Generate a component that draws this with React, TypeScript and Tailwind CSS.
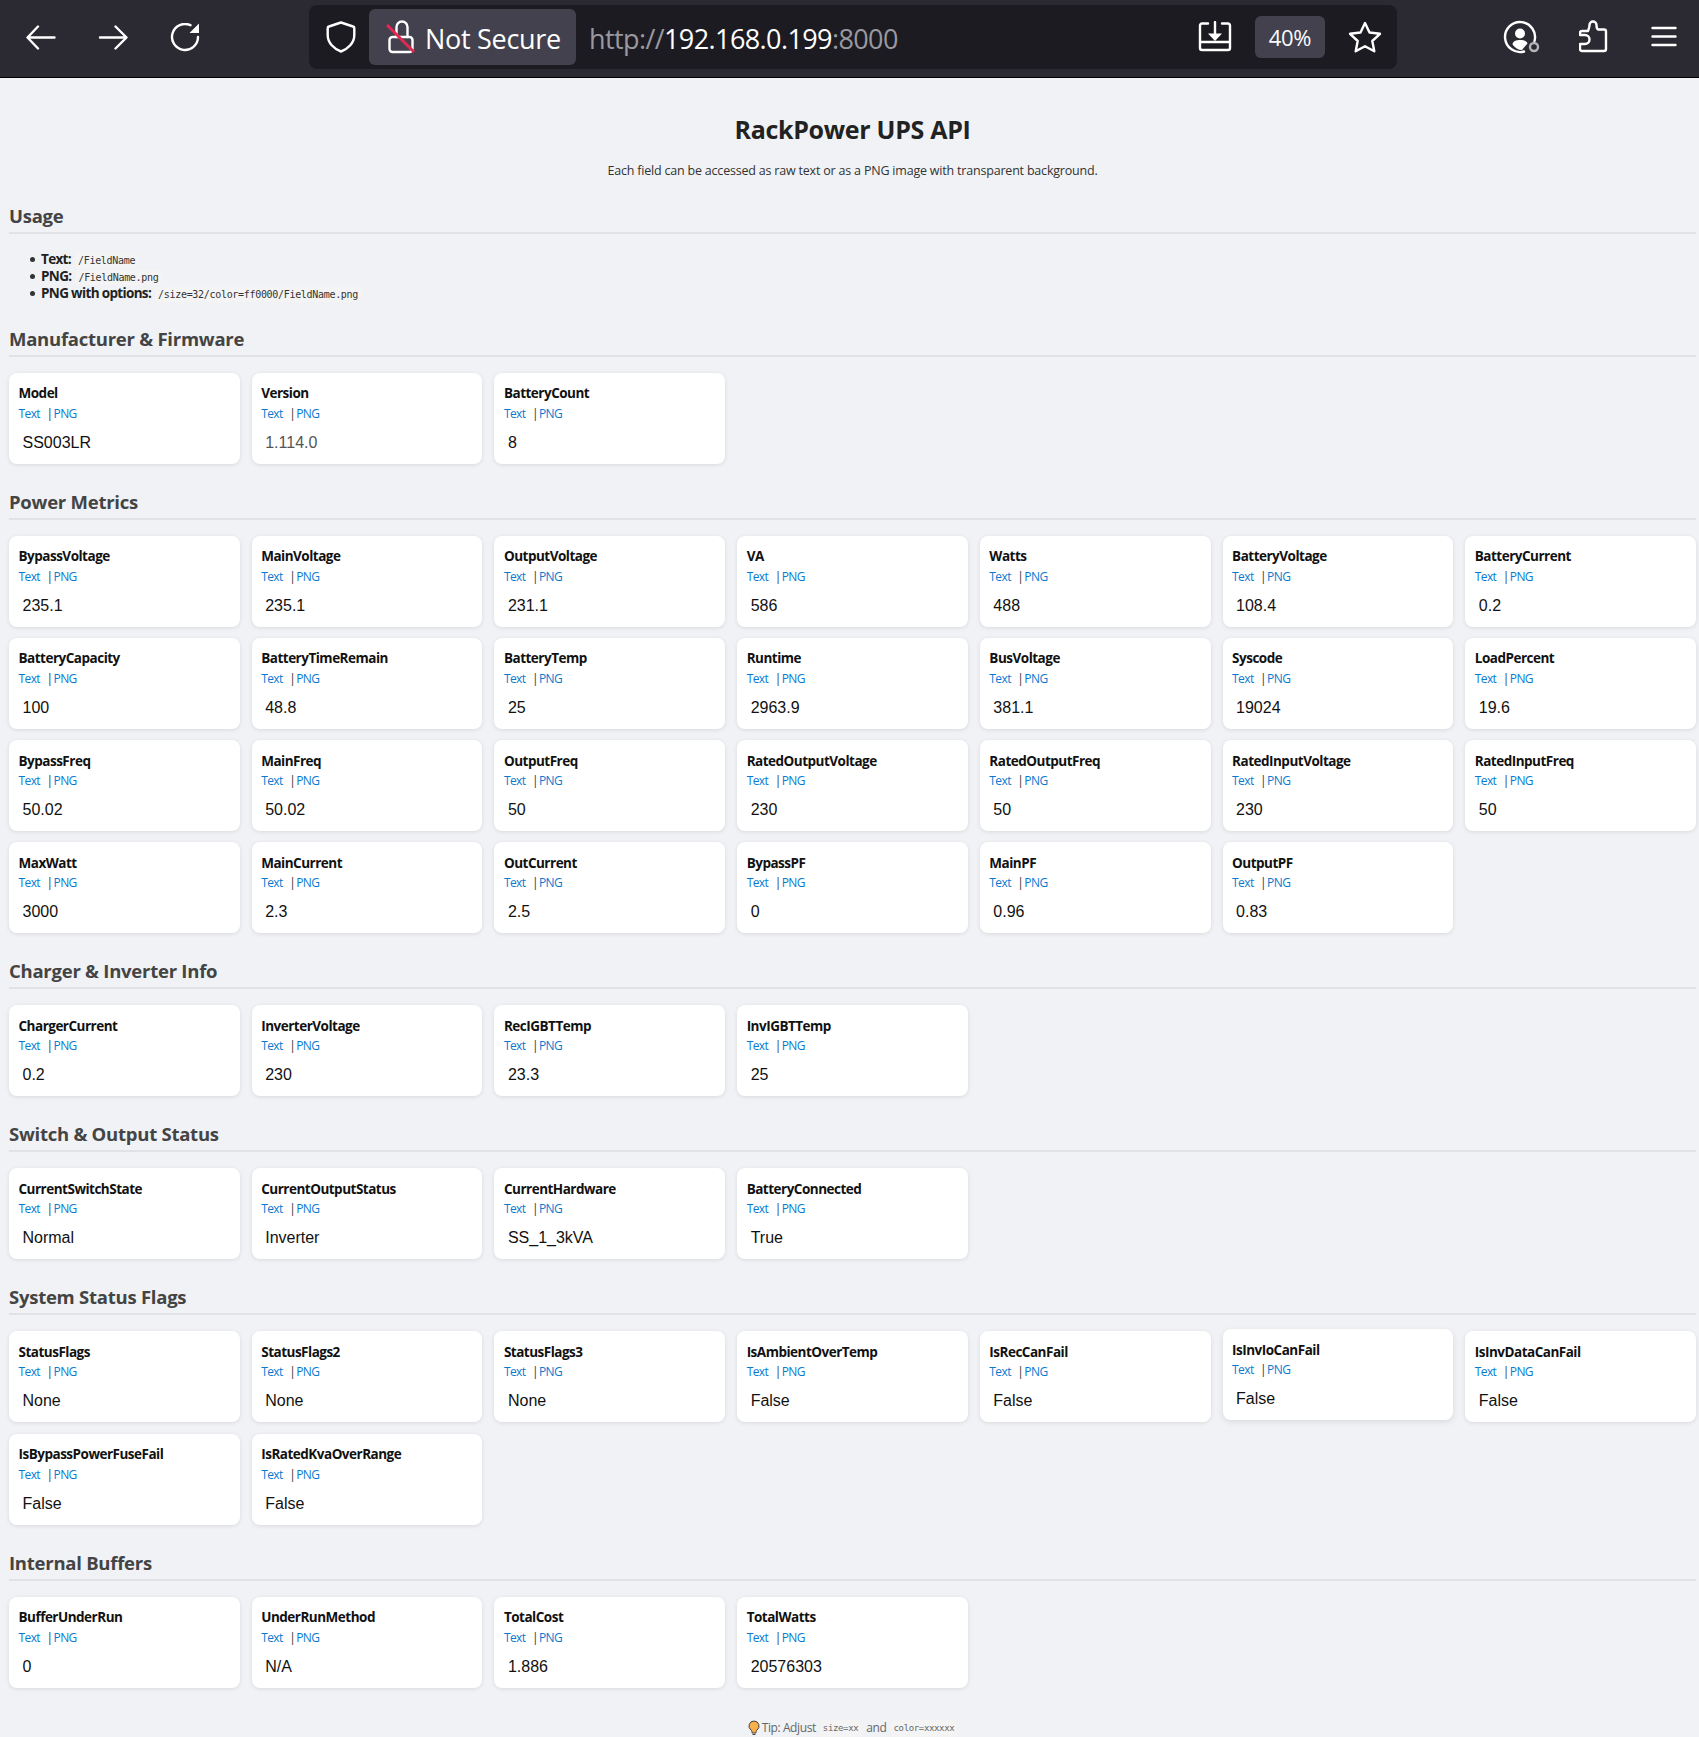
import React from "react";

type Field = [string, string];
const sections: { title: string; fields: Field[] }[] = [
  { title: "Manufacturer & Firmware", fields: [["Model", "SS003LR"], ["Version", "1.114.0"], ["BatteryCount", "8"]] },
  {
    title: "Power Metrics",
    fields: [
      ["BypassVoltage", "235.1"], ["MainVoltage", "235.1"], ["OutputVoltage", "231.1"], ["VA", "586"], ["Watts", "488"], ["BatteryVoltage", "108.4"], ["BatteryCurrent", "0.2"],
      ["BatteryCapacity", "100"], ["BatteryTimeRemain", "48.8"], ["BatteryTemp", "25"], ["Runtime", "2963.9"], ["BusVoltage", "381.1"], ["Syscode", "19024"], ["LoadPercent", "19.6"],
      ["BypassFreq", "50.02"], ["MainFreq", "50.02"], ["OutputFreq", "50"], ["RatedOutputVoltage", "230"], ["RatedOutputFreq", "50"], ["RatedInputVoltage", "230"], ["RatedInputFreq", "50"],
      ["MaxWatt", "3000"], ["MainCurrent", "2.3"], ["OutCurrent", "2.5"], ["BypassPF", "0"], ["MainPF", "0.96"], ["OutputPF", "0.83"],
    ],
  },
  { title: "Charger & Inverter Info", fields: [["ChargerCurrent", "0.2"], ["InverterVoltage", "230"], ["RecIGBTTemp", "23.3"], ["InvIGBTTemp", "25"]] },
  { title: "Switch & Output Status", fields: [["CurrentSwitchState", "Normal"], ["CurrentOutputStatus", "Inverter"], ["CurrentHardware", "SS_1_3kVA"], ["BatteryConnected", "True"]] },
  {
    title: "System Status Flags",
    fields: [
      ["StatusFlags", "None"], ["StatusFlags2", "None"], ["StatusFlags3", "None"], ["IsAmbientOverTemp", "False"], ["IsRecCanFail", "False"], ["IsInvIoCanFail", "False"], ["IsInvDataCanFail", "False"],
      ["IsBypassPowerFuseFail", "False"], ["IsRatedKvaOverRange", "False"],
    ],
  },
  { title: "Internal Buffers", fields: [["BufferUnderRun", "0"], ["UnderRunMethod", "N/A"], ["TotalCost", "1.886"], ["TotalWatts", "20576303"]] },
];

function Card({ name, value }: { name: string; value: string }) {
  const hovered = name === "IsInvIoCanFail";
  return (
    <div className={hovered ? "h-[91px] rounded-lg bg-white pl-[9.5px] pt-[10.5px] shadow-[0_2px_6px_rgba(0,0,0,0.1)] -translate-y-0.5" : "h-[91px] rounded-lg bg-white pl-[9.5px] pt-[10.5px] shadow-[0_1px_4px_rgba(0,0,0,0.1)]"}>
      <div className="text-[13.500px] leading-[20px] font-bold text-[#111] font-['Open_Sans',sans-serif] tracking-[-0.5px]">{name}</div>
      <div className="mt-[0.5px] flex items-center text-[12px] leading-[20px] font-['Open_Sans',sans-serif] tracking-[-0.6px]">
        <span className="text-[#0a7ad1]">Text</span>
        <span className="ml-[6.500px] text-[#333]">|</span>
        <span className="ml-[1px] text-[#0a7ad1]">PNG</span>
      </div>
      <div className={name === "Version" ? "mt-[9px] pl-[4px] text-[16px] leading-[20px] text-[#555] font-['Liberation_Sans',sans-serif]" : "mt-[9px] pl-[4px] text-[16px] leading-[20px] text-[#111] font-['Liberation_Sans',sans-serif]"}>{value}</div>
    </div>
  );
}

function Code({ children }: { children: React.ReactNode }) {
  return <code className="ml-[4px] rounded-[3px] bg-[#f4f4f4] px-[3px] py-[2px] text-[10px] leading-[14px] font-['DejaVu_Sans_Mono',monospace] tracking-[-0.31px] text-[#333]">{children}</code>;
}

function TipCode({ children }: { children: React.ReactNode }) {
  return <code className="ml-[4px] rounded-[3px] bg-[#f4f4f4] px-[3px] py-[2px] text-[9px] leading-[13px] font-['DejaVu_Sans_Mono',monospace] tracking-[-0.35px] text-[#666]">{children}</code>;
}

function Bullet() {
  return <span className="mb-[2px] mr-[6px] inline-block size-[5px] rounded-full bg-[#333] align-middle" />;
}

const ic = { fill: "none", stroke: "white", strokeWidth: 2.4, strokeLinecap: "round" as const, strokeLinejoin: "round" as const };
const headingCls = "border-b-2 border-[#e0e2e6] pb-[2px] text-[18.500px] leading-[28px] font-bold text-[#444] font-['Open_Sans',sans-serif] tracking-[-0.25px]";
const boldCls = "font-bold text-[13.500px] tracking-[-0.66px]";

function Toolbar() {
  return (
    <div className="flex h-[78px] items-start border-b border-black bg-[#2b2a33] pt-[5px] font-['Open_Sans',sans-serif]">
      <div className="ml-[26px] mt-[18px] flex gap-[42px]">
        <svg width="30" height="30" viewBox="0 0 30 30" {...ic}><path d="M28.500 14.500H2M12 3.500 1.500 14.500 12 25.500" /></svg>
        <svg width="30" height="30" viewBox="0 0 30 30" {...ic}><path d="M2 14.500H28M17.500 3.500 28.500 14.500 17.500 25.500" /></svg>
        <svg width="30" height="30" viewBox="0 0 30 30" {...ic}><path d="M28 14A13 13 0 1 1 20.500 2.200" /><path d="M29 .5V10H19.500z" fill="white" stroke="none" /></svg>
      </div>
      <div className="ml-[109px] flex h-[64px] w-[1088px] items-center rounded-lg bg-[#1c1b22] pl-[17px]">
        <svg width="30" height="32" viewBox="0 0 30 32" {...ic}><path d="M15 1.500 27 5.500a1.500 1.500 0 0 1 1.300 1.500V14C28.300 22 22 28 15 30.500 8 28 1.700 22 1.700 14V7a1.500 1.500 0 0 1 1.300-1.500z" /></svg>
        <div className="ml-[13px] flex h-[56px] w-[207px] items-center rounded-md bg-[#42414d] pl-[17px] text-[27px] text-white">
          <svg width="30" height="34" viewBox="0 0 30 34" {...ic}>
            <path d="M10.500 17V7a5.500 5.500 0 0 1 11 0V17" />
            <rect x="3.500" y="17" width="23" height="15" rx="3" />
            <path d="M1 5 28 32" stroke="#e22850" strokeWidth="3" strokeLinecap="butt" />
          </svg>
          <span className="ml-[9px] mt-[5px] tracking-[-0.3px]">Not Secure</span>
        </div>
        <div className="ml-[13px] mt-[5px] text-[27px] tracking-[-0.6px] text-white"><span className="text-[#9a999f]">http://</span>192.168.0.199<span className="text-[#9a999f]">:8000</span></div>
        <div className="flex-1" />
        <svg width="34" height="32" viewBox="0 0 34 32" {...ic}>
          <path d="M10 2.500H4a2 2 0 0 0-2 2V27a2 2 0 0 0 2 2H30a2 2 0 0 0 2-2V4.500a2 2 0 0 0-2-2H24M2 21H32" />
          <path d="M17 1V14" /><path d="M10 12.500H24L17 20z" fill="white" stroke="none" />
        </svg>
        <div className="ml-[23px] flex h-[42px] w-[70px] items-center justify-center rounded-md bg-[#42414d] text-[22px] tracking-[-0.3px] text-[#fbfbfe]">40%</div>
        <svg className="ml-[23px] mr-[15px]" width="34" height="32" viewBox="0 0 34 32" {...ic}><path d="M17 2l4.500 9.500 10.500 1.300-7.700 7.200 2 10.300-9.300-5.100-9.300 5.100 2-10.300L2 12.800l10.500-1.300z" /></svg>
      </div>
      <div className="ml-[106px] mt-[15px] flex items-center">
        <svg width="38" height="34" viewBox="0 0 38 34" {...ic}>
          <path d="M31.500 21A15 15 0 1 0 21 31.500" />
          <circle cx="17" cy="13.500" r="5" fill="white" stroke="none" />
          <path d="M9.500 24.500C10 21 13 20 17 20 21 20 24 21 24.500 23.500L21 27.500 19 30C15 30 12 28 9.500 24.500z" fill="white" stroke="none" />
          <circle cx="31" cy="27" r="4" stroke="#b5b5b8" />
        </svg>
        <svg className="ml-[38px]" width="30" height="34" viewBox="0 0 30 34" {...ic}><path d="M9 11C9.500 9 10.500 8 10.500 5a3.500 3.500 0 0 1 7 0C17.500 8 18 9 19 9.500H25a2 2 0 0 1 2 2V29a2 2 0 0 1-2 2H3a2 2 0 0 1-2-2V24H6a4.500 4.500 0 0 0 0-9H1V13a2 2 0 0 1 2-2z" /></svg>
        <svg className="ml-[42px]" width="26" height="22" viewBox="0 0 26 22" {...ic}><path d="M1.500 2H24.500M1.500 10.500H24.500M1.500 19H24.500" /></svg>
      </div>
    </div>
  );
}

export default function App() {
  return (
    <div className="min-h-[1737px] bg-[#f0f2f5]">
      <Toolbar />
      <div className="pl-[9px] pr-[3px] pt-[30px]">
        <h1 className="text-center text-[25px] leading-[42px] font-bold text-[#222] font-['Open_Sans',sans-serif] tracking-[-0.3px]">RackPower UPS API</h1>
        <p className="mt-[11px] text-center text-[12.500px] leading-[20px] text-[#333] font-['Open_Sans',sans-serif] tracking-[-0.2px]">Each field can be accessed as raw text or as a PNG image with transparent background.</p>
        <h2 className={"mt-[20.500px] " + headingCls}>Usage</h2>
        <ul className="mt-[17px] ml-[21px] list-none text-[13px] leading-[17px] text-[#222] font-['Open_Sans',sans-serif]">
          <li><Bullet /><b className={boldCls}>Text:</b><Code>/FieldName</Code></li>
          <li><Bullet /><b className={boldCls}>PNG:</b><Code>/FieldName.png</Code></li>
          <li><Bullet /><b className={boldCls}>PNG with options:</b><Code>/size=32/color=ff0000/FieldName.png</Code></li>
        </ul>
        {sections.map((s, i) => (
          <div key={s.title} className={i === 0 ? "mt-[23px]" : "mt-[24px]"}>
            <h2 className={headingCls}>{s.title}</h2>
            <div className="mt-[16px] grid grid-cols-7 gap-x-[12px] gap-y-[11.250px]">
              {s.fields.map(([n, v]) => <Card key={n} name={n} value={v} />)}
            </div>
          </div>
        ))}
        <div className="mt-[31.500px] flex items-center justify-center text-[12px] leading-[18px] text-[#666] font-['Open_Sans',sans-serif] tracking-[-0.4px]">
          <svg width="12" height="16" viewBox="0 0 12 16"><path d="M6 1a5 5 0 0 0-3 9c1 1 1 2 1 3h4c0-1 0-2 1-3a5 5 0 0 0-3-9z" fill="#f7b04b" stroke="#444" /><path d="M4.500 14.500h3" stroke="#444" /></svg>
          <span className="ml-[2px]">Tip: Adjust</span><TipCode>size=xx</TipCode><span className="ml-[5px]">and</span><TipCode>color=xxxxxx</TipCode>
        </div>
      </div>
    </div>
  );
}
